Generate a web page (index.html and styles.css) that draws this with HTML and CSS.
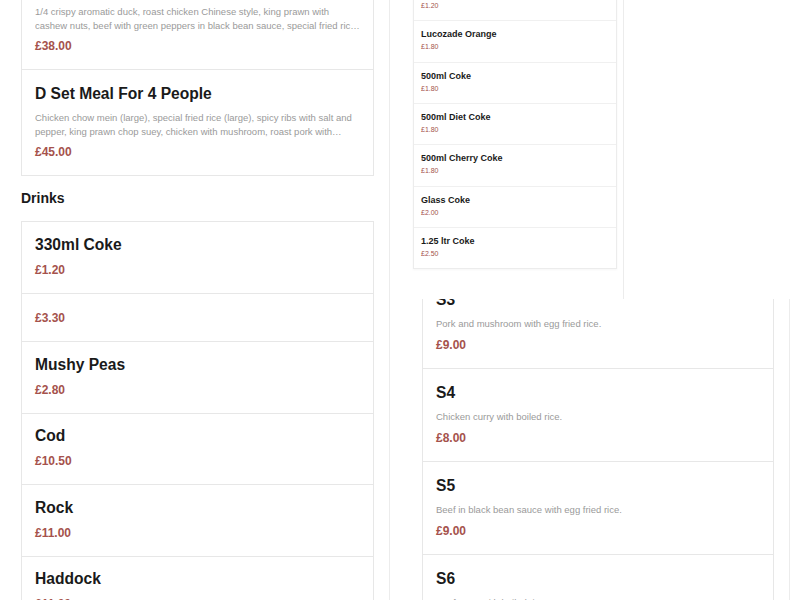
FILE: index.html
```html
<!DOCTYPE html>
<html lang="en">
<head>
<meta charset="utf-8">
<title>Menu</title>
<link rel="stylesheet" href="styles.css">
</head>
<body>
<div class="band band-top">
  <div class="col-left">
    <div class="cards cards-top">
      <div class="card">
        <h3 class="title">C Set Meal For 3 People</h3>
        <p class="desc">1/4 crispy aromatic duck, roast chicken Chinese style, king prawn with cashew nuts, beef with green peppers in black bean sauce, special fried rice (large), prawn crackers.</p>
        <div class="price">£38.00</div>
      </div>
      <div class="card">
        <h3 class="title">D Set Meal For 4 People</h3>
        <p class="desc">Chicken chow mein (large), special fried rice (large), spicy ribs with salt and pepper, king prawn chop suey, chicken with mushroom, roast pork with Chinese vegetables, prawn crackers.</p>
        <div class="price">£45.00</div>
      </div>
    </div>
    <h2 class="section">Drinks</h2>
    <div class="cards">
      <div class="card nodesc">
        <h3 class="title">330ml Coke</h3>
        <div class="price">£1.20</div>
      </div>
      <div class="card nodesc">
        <h3 class="title">330ml Diet Coke</h3>
        <div class="price">£1.20</div>
      </div>
    </div>
  </div>
  <div class="col-mid">
    <div class="panel">
      <div class="pitem"><div class="pname">330ml Lucozade</div><div class="pprice">£1.20</div></div>
      <div class="pitem"><div class="pname">Lucozade Orange</div><div class="pprice">£1.80</div></div>
      <div class="pitem"><div class="pname">500ml Coke</div><div class="pprice">£1.80</div></div>
      <div class="pitem"><div class="pname">500ml Diet Coke</div><div class="pprice">£1.80</div></div>
      <div class="pitem"><div class="pname">500ml Cherry Coke</div><div class="pprice">£1.80</div></div>
      <div class="pitem"><div class="pname">Glass Coke</div><div class="pprice">£2.00</div></div>
      <div class="pitem"><div class="pname">1.25 ltr Coke</div><div class="pprice">£2.50</div></div>
    </div>
  </div>
</div>
<div class="band band-bottom">
  <div class="col-left">
    <div class="cards cards-bl">
      <div class="card nodesc">
        <h3 class="title">Fish Cake</h3>
        <div class="price">£3.30</div>
      </div>
      <div class="card nodesc">
        <h3 class="title">Mushy Peas</h3>
        <div class="price">£2.80</div>
      </div>
      <div class="card nodesc">
        <h3 class="title">Cod</h3>
        <div class="price">£10.50</div>
      </div>
      <div class="card nodesc">
        <h3 class="title">Rock</h3>
        <div class="price">£11.00</div>
      </div>
      <div class="card nodesc">
        <h3 class="title">Haddock</h3>
        <div class="price">£11.00</div>
      </div>
    </div>
  </div>
  <div class="col-right">
    <div class="cards cards-s">
      <div class="card">
        <h3 class="title">S3</h3>
        <p class="desc">Pork and mushroom with egg fried rice.</p>
        <div class="price">£9.00</div>
      </div>
      <div class="card">
        <h3 class="title">S4</h3>
        <p class="desc">Chicken curry with boiled rice.</p>
        <div class="price">£8.00</div>
      </div>
      <div class="card">
        <h3 class="title">S5</h3>
        <p class="desc">Beef in black bean sauce with egg fried rice.</p>
        <div class="price">£9.00</div>
      </div>
      <div class="card">
        <h3 class="title">S6</h3>
        <p class="desc">Beef curry with boiled rice.</p>
        <div class="price">£8.00</div>
      </div>
    </div>
  </div>
</div>
</body>
</html>
```

FILE: styles.css
```css
* { box-sizing: border-box; }

html, body {
  margin: 0;
  padding: 0;
  background: #ffffff;
  font-family: "Liberation Sans", Arial, Helvetica, sans-serif;
  color: #1c1c1c;
}

.band {
  display: flex;
  align-items: flex-start;
  overflow: hidden;
  background: #ffffff;
}

.band-top { height: 299px; }
.band-bottom { height: 301px; }

.col-left {
  flex: none;
  width: 353px;
  margin-left: 21px;
}

.cards {
  border: 1px solid #e7e7e7;
  background: #ffffff;
}

.cards-top { margin-top: -37px; }
.cards-bl { margin-top: -29.5px; }
.cards-s { margin-top: -24px; }

.card {
  padding: 14px 13px 15px;
}

.card + .card { border-top: 1px solid #e7e7e7; }

.card.nodesc { padding-top: 12.5px; padding-bottom: 15px; }
.cards-s .card { padding-bottom: 15px; }
.cards-s .desc { margin-bottom: 6px; }

.title {
  margin: 0;
  font-size: 15.6px;
  line-height: 20px;
  font-weight: 700;
  color: #1a1a1a;
}

.desc {
  margin: 7px 0 5px;
  font-size: 9.5px;
  line-height: 14px;
  color: #9a9a9a;
  display: -webkit-box;
  -webkit-box-orient: vertical;
  -webkit-line-clamp: 2;
  overflow: hidden;
}

.price {
  font-size: 12px;
  line-height: 16px;
  font-weight: 700;
  color: #a5524c;
}

.title + .price { margin-top: 7px; }

.section {
  margin: 13px 0 14px;
  font-size: 14px;
  line-height: 18px;
  font-weight: 700;
  color: #1a1a1a;
}

.col-mid {
  flex: none;
  align-self: stretch;
  margin-left: 15px;
  width: 235px;
  padding: 0 6px 0 23px;
  border-left: 1px solid #ececec;
  border-right: 1px solid #ececec;
}

.panel {
  margin-top: -21px;
  width: 204px;
  border: 1px solid #ececec;
  background: #ffffff;
  box-shadow: 0 1px 2px rgba(0, 0, 0, 0.04);
}

.pitem {
  padding: 7px 7px 9.33px;
}

.pitem + .pitem { border-top: 1px solid #f0f0f0; }

.pname {
  font-size: 9px;
  line-height: 12px;
  font-weight: 700;
  color: #1a1a1a;
}

.pprice {
  margin-top: 2px;
  font-size: 7px;
  line-height: 10px;
  color: #a5524c;
}

.col-right {
  flex: none;
  align-self: stretch;
  margin-left: 15px;
  width: 401px;
  padding: 0 15px 0 32px;
  border-left: 1px solid #ececec;
  border-right: 1px solid #ececec;
}
```
